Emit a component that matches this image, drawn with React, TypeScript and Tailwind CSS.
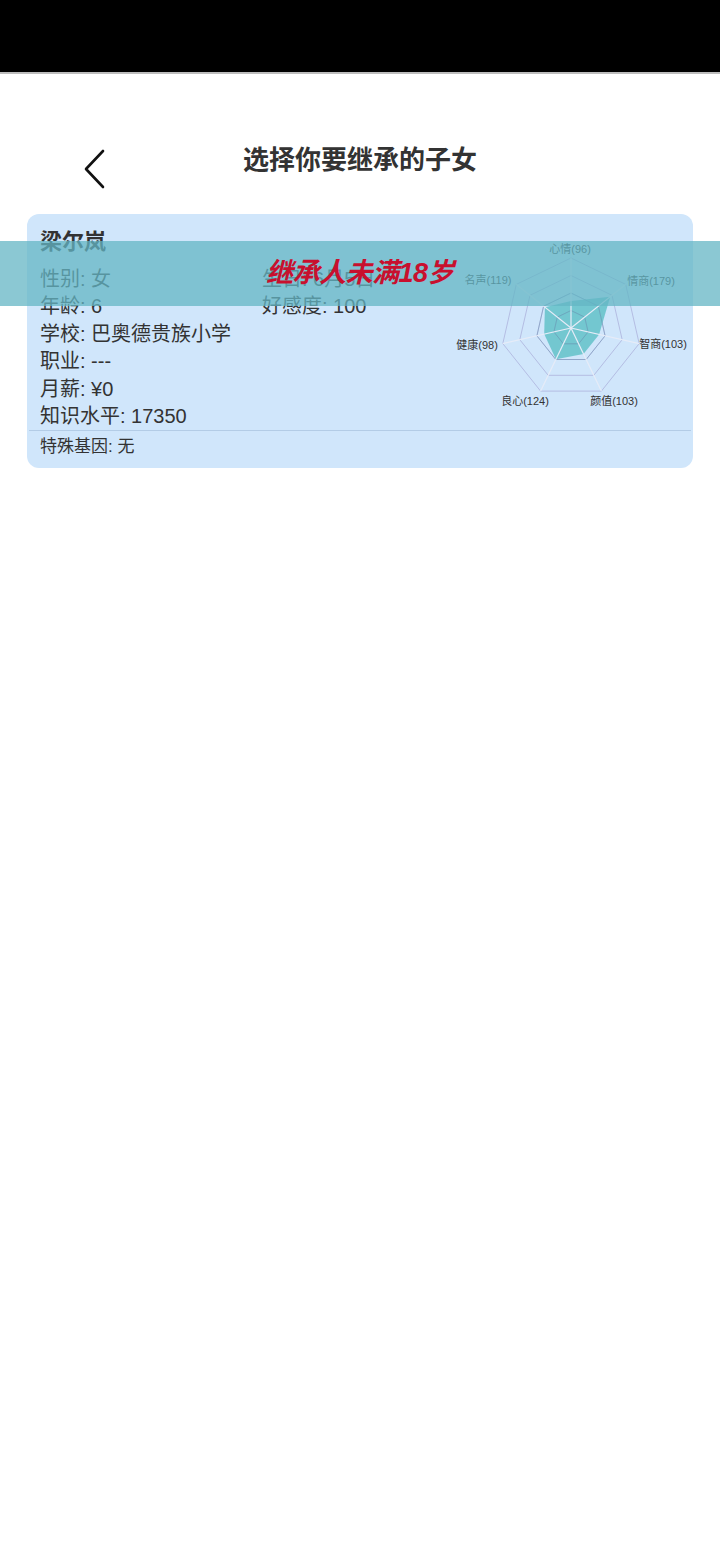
const FONT = '"Liberation Sans", "Noto Sans CJK SC", sans-serif'

const STATS = [
  { name: '心情', value: 96, lx: 122, ly: 12 },
  { name: '情商', value: 179, lx: 203, ly: 44 },
  { name: '智商', value: 103, lx: 215, ly: 107 },
  { name: '颜值', value: 103, lx: 166, ly: 164 },
  { name: '良心', value: 124, lx: 77, ly: 164 },
  { name: '健康', value: 98, lx: 29, ly: 108 },
  { name: '名声', value: 119, lx: 40, ly: 43 },
]

const CX = 123
const CY = 90
const R = 70
const MAX = 250

function point(i: number, r: number) {
  const a = -Math.PI / 2 + (i * 2 * Math.PI) / STATS.length
  return [CX + r * Math.cos(a), CY + r * Math.sin(a)]
}

function ring(r: number) {
  return STATS.map((_, i) => point(i, r).map(n => n.toFixed(1)).join(',')).join(' ')
}

function RadarChart() {
  const data = STATS.map((s, i) => point(i, (s.value / MAX) * R).map(n => n.toFixed(1)).join(',')).join(' ')
  return (
    <svg width="245" height="182" viewBox="0 0 245 182" className="shrink-0 mt-[11px]">
      {[R, R * 0.75, R * 0.5, R * 0.25].map(r => (
        <polygon key={r} points={ring(r)} fill="none" stroke="#b4bde3" strokeWidth="1" />
      ))}
      <polygon points={data} fill="#5bbfc6" fillOpacity="0.8" />
      {[R * 0.5, R * 0.25].map(r => (
        <polygon key={r} points={ring(r)} fill="none" stroke="#6e8fb0" strokeOpacity="0.5" strokeWidth="1" />
      ))}
      {STATS.map((_, i) => {
        const [x, y] = point(i, R)
        return <line key={i} x1={CX} y1={CY} x2={x} y2={y} stroke="#e6ecf8" strokeWidth="1.2" />
      })}
      {STATS.map(s => (
        <text
          key={s.name}
          x={s.lx}
          y={s.ly}
          textAnchor="middle"
          dominantBaseline="middle"
          fontSize="11"
          fill="#333"
          style={{ fontFamily: FONT }}
        >
          {s.name}({s.value})
        </text>
      ))}
    </svg>
  )
}

export default function App() {
  return (
    <div className="w-[720px] h-[1554px] bg-white text-[#333]" style={{ fontFamily: FONT }}>
      <div className="h-[74px] bg-black border-b-2 border-[#bdbdbd]" />

      {/* header */}
      <div className="relative h-[140px]">
        <button className="absolute left-[78px] top-[74px] w-[32px] h-[42px] flex items-center justify-center">
          <svg width="24" height="40" viewBox="0 0 24 40" fill="none">
            <polyline points="21,2 4,20 21,38" stroke="#111" strokeWidth="2.6" strokeLinejoin="round" strokeLinecap="round" />
          </svg>
        </button>
        <h1 className="pt-[69px] text-center text-[26px] leading-[34px] font-semibold text-[#333]">选择你要继承的子女</h1>
      </div>

      {/* child card */}
      <div className="relative mx-[27px] rounded-[12px] bg-[#d0e6fb]">
        <div className="flex justify-between pl-[13px] pt-[13px]">
          <div className="flex flex-col">
            <div className="text-[22px] leading-[30px] font-bold">梁尔岚</div>
            <div className="mt-[9px] grid grid-cols-[222px_auto] text-[20px] leading-[27.4px]">
              <div>性别: 女</div>
              <div>生日: 6月5日</div>
              <div>年龄: 6</div>
              <div>好感度: 100</div>
              <div className="col-span-2">学校: 巴奥德贵族小学</div>
              <div className="col-span-2">职业: ---</div>
              <div className="col-span-2">月薪: ¥0</div>
              <div className="col-span-2">知识水平: 17350</div>
            </div>
          </div>
          <RadarChart />
        </div>
        <div className="mx-[2px] h-px bg-[#b3cce6]" />
        <div className="pl-[13px] pb-[5px] text-[17px] leading-[32px]">特殊基因: 无</div>
      </div>

      {/* locked overlay */}
      <div className="absolute left-0 top-[241px] w-[720px] h-[65px] bg-[rgba(100,181,196,0.75)] flex items-center justify-center">
        <span className="text-[27px] font-bold italic text-[#c8102e] tracking-[-0.5px]">继承人未满18岁</span>
      </div>
    </div>
  )
}
